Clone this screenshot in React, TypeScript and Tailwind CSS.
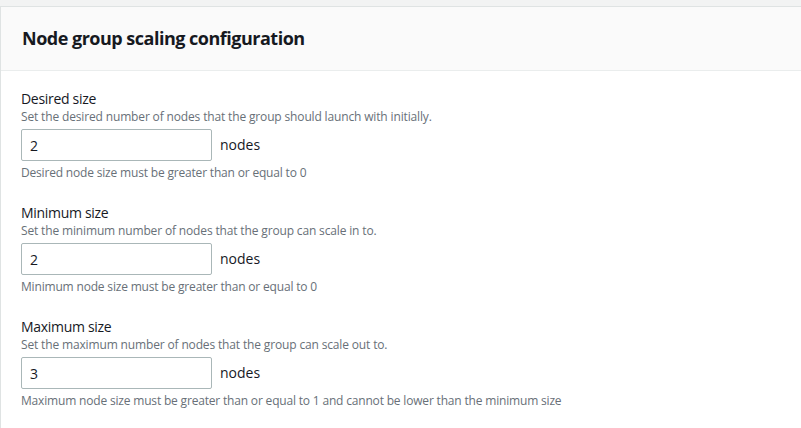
import React from 'react';

const fields = [
  {
    label: 'Desired size',
    desc: 'Set the desired number of nodes that the group should launch with initially.',
    value: '2',
    help: 'Desired node size must be greater than or equal to 0',
  },
  {
    label: 'Minimum size',
    desc: 'Set the minimum number of nodes that the group can scale in to.',
    value: '2',
    help: 'Minimum node size must be greater than or equal to 0',
  },
  {
    label: 'Maximum size',
    desc: 'Set the maximum number of nodes that the group can scale out to.',
    value: '3',
    help: 'Maximum node size must be greater than or equal to 1 and cannot be lower than the minimum size',
  },
];

const App = () => {
  return (
    <div
      className="w-[801px] h-[428px] overflow-hidden bg-[#f2f3f3] pt-[6px]"
      style={{ fontFamily: '"Open Sans", "Noto Sans", sans-serif' }}
    >
      <div className="h-full border-t border-l border-[#dfe3e3] bg-white">
        <div className="h-[64px] bg-[#fafafa] border-b border-[#eaeded] flex items-center px-[21px]">
          <h2 className="text-[18px] font-bold text-[#16191f] tracking-[-0.5px]">
            Node group scaling configuration
          </h2>
        </div>
        <div className="flex flex-col gap-[22px] pl-[20px] pt-[18px]">
          {fields.map((f) => (
            <div key={f.label} className="flex flex-col">
              <label className="text-[14px] leading-[20px] text-[#16191f] tracking-[-0.3px]">
                {f.label}
              </label>
              <p className="text-[12px] leading-[16px] text-[#687078] tracking-[-0.15px]">{f.desc}</p>
              <div className="flex items-center gap-2 mt-1">
                <input
                  readOnly
                  value={f.value}
                  className="w-[191px] h-[32px] border border-[#aab7b8] rounded-[2px] px-2 text-[14px] text-[#16191f] outline-none"
                />
                <span className="text-[14px] text-[#16191f] -mt-[2px]">nodes</span>
              </div>
              <p className="mt-1 text-[12px] leading-[16px] text-[#687078] tracking-[-0.18px]">
                {f.help}
              </p>
            </div>
          ))}
        </div>
      </div>
    </div>
  );
};

export default App;
